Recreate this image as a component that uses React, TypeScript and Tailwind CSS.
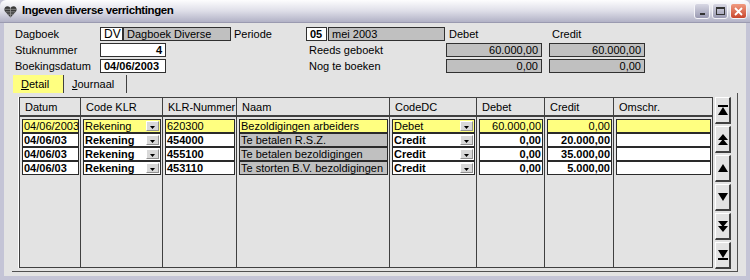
const rows = [
  { datum: '04/06/2003', code: 'Rekening', nr: '620300', naam: 'Bezoldigingen arbeiders', dc: 'Debet', debet: '60.000,00', credit: '0,00', active: true },
  { datum: '04/06/03', code: 'Rekening', nr: '454000', naam: 'Te betalen R.S.Z.', dc: 'Credit', debet: '0,00', credit: '20.000,00', active: false },
  { datum: '04/06/03', code: 'Rekening', nr: '455100', naam: 'Te betalen bezoldigingen', dc: 'Credit', debet: '0,00', credit: '35.000,00', active: false },
  { datum: '04/06/03', code: 'Rekening', nr: '453110', naam: 'Te storten B.V. bezoldigingen', dc: 'Credit', debet: '0,00', credit: '5.000,00', active: false },
]

type Row = (typeof rows)[number]

const columns: { title: string; width: string; kind: 'text' | 'combo' | 'num' | 'naam'; get: (r: Row) => string }[] = [
  { title: 'Datum', width: 'w-[61px]', kind: 'text', get: (r) => r.datum },
  { title: 'Code KLR', width: 'w-[82px]', kind: 'combo', get: (r) => r.code },
  { title: 'KLR-Nummer', width: 'w-[74px]', kind: 'text', get: (r) => r.nr },
  { title: 'Naam', width: 'w-[153px]', kind: 'naam', get: (r) => r.naam },
  { title: 'CodeDC', width: 'w-[87px]', kind: 'combo', get: (r) => r.dc },
  { title: 'Debet', width: 'w-[68px]', kind: 'num', get: (r) => r.debet },
  { title: 'Credit', width: 'w-[69px]', kind: 'num', get: (r) => r.credit },
  { title: 'Omschr.', width: 'w-[99px]', kind: 'text', get: () => '' },
]

const DropArrow = () => (
  <svg width="5" height="3" viewBox="0 0 5 3" className="mt-[2px]">
    <path d="M0 0h5L2.5 3z" fill="#000" />
  </svg>
)

const Cell = ({ row, kind, text }: { row: Row; kind: string; text: string }) => {
  let tone = row.active ? 'bg-[#ffff80]' : 'bg-white font-bold'
  if (kind === 'naam' && !row.active) tone = 'bg-[#c0c0c0]'
  return (
    <div className={`ml-[2px] mr-[1px] h-[14px] border border-[#2a2a2a] flex ${tone}`}>
      <div className={`flex-1 px-[1px] leading-[12px] whitespace-nowrap ${kind === 'num' ? 'text-right' : ''}`}>{text}</div>
      {kind === 'combo' && (
        <div className="w-[13px] my-[1px] mr-[1px] bg-[#d8d8d8] border-t border-l border-white border-r border-b border-r-[#909090] border-b-[#909090] flex items-center justify-center">
          <DropArrow />
        </div>
      )}
    </div>
  )
}

const Box = ({ w, children, grey, bold, right }: { w: string; children?: React.ReactNode; grey?: boolean; bold?: boolean; right?: boolean }) => (
  <div
    className={`${w} h-[14px] border border-[#303030] leading-[12px] px-[3px] whitespace-nowrap overflow-hidden ${grey ? 'bg-[#c0c0c0]' : 'bg-white'} ${bold ? 'font-bold' : ''} ${right ? 'text-right' : ''}`}
  >
    {children}
  </div>
)

const ScrollIcon = ({ type }: { type: number }) => {
  const paths: Record<number, string> = {
    0: 'M0 0h10v2H0z M5 2L10 10H0z',
    1: 'M5 0L10 6H0z M5 5L10 11H0z',
    2: 'M5 1L10 9H0z',
    3: 'M0 1h10L5 9z',
    4: 'M0 0h10L5 6z M0 5h10L5 11z',
    5: 'M0 0h10L5 8z M0 8h10v2H0z',
  }
  return (
    <svg width="10" height="11" viewBox="0 0 10 11">
      <path d={paths[type]} fill="#000" />
    </svg>
  )
}

export default function App() {
  return (
    <div className="w-[750px] h-[280px] bg-[#c4c4d6] flex flex-col overflow-hidden font-['Liberation_Sans',Arial,sans-serif] text-[11px] text-black">
      {/* title bar */}
      <div className="h-[23px] flex items-center bg-linear-to-b from-[#fdfdfe] via-[#dedee8] to-[#b2b2c6] border-b border-[#9a9ab0] rounded-t-[6px] shrink-0">
        <svg width="13" height="13" viewBox="0 0 12 12" className="ml-[4px] mr-[5px]">
          <path d="M6 11.5L0.8 5.8C-0.2 4.2 0.6 1.2 3.2 1.2C4.6 1.2 5.5 2.2 6 2.8C6.5 2.2 7.4 1.2 8.8 1.2C11.4 1.2 12.2 4.2 11.2 5.8Z" fill="#3a3a3a" />
          <path d="M1 4h10M1.5 6.3h9M3 8.5h6M6 2.8V11" stroke="#9a9a9a" strokeWidth="0.7" />
        </svg>
        <span className="font-bold text-[11.5px] tracking-[-0.4px]">Ingeven diverse verrichtingen</span>
        <div className="ml-auto mr-[3px] flex gap-[2px]">
          <div className="w-[16px] h-[16px] rounded-[3px] border border-[#f4f4f8] bg-linear-to-b from-[#d8d8e4] to-[#9a9ab2] flex items-end justify-center pb-[3px]">
            <div className="w-[5px] h-[2px] bg-[#333]" />
          </div>
          <div className="w-[16px] h-[16px] rounded-[3px] border border-[#f4f4f8] bg-linear-to-b from-[#d8d8e4] to-[#9a9ab2] flex items-center justify-center">
            <div className="w-[9px] h-[8px] border border-[#333] border-t-2" />
          </div>
          <div className="w-[17px] h-[16px] rounded-[3px] border border-[#f4f4f8] bg-linear-to-b from-[#f09a80] to-[#c8442c] flex items-center justify-center">
            <svg width="9" height="9" viewBox="0 0 9 9">
              <path d="M1 1L8 8M8 1L1 8" stroke="#fff" strokeWidth="1.8" />
            </svg>
          </div>
        </div>
      </div>

      {/* body */}
      <div className="flex-1 mx-[4px] mb-[4px] bg-[#e3e3e3] flex flex-col pt-[4px]">
        <div className="flex flex-col gap-[2px] pl-[11px] leading-[14px]">
          <div className="flex h-[14px]">
            <div className="w-[85px]">Dagboek</div>
            <Box w="w-[23px]">
              <span className="text-[12px]">DV</span>
            </Box>
            <Box w="w-[108px]" grey>
              Dagboek Diverse
            </Box>
            <div className="w-[75px] pl-[3px]">Periode</div>
            <Box w="w-[21px]" bold>
              05
            </Box>
            <div className="w-[1px]" />
            <Box w="w-[117px]" grey>
              mei 2003
            </Box>
            <div className="w-[107px] pl-[4px]">Debet</div>
            <div>Credit</div>
          </div>
          <div className="flex h-[14px]">
            <div className="w-[85px]">Stuknummer</div>
            <Box w="w-[66px]" bold right>
              4
            </Box>
            <div className="w-[143px]" />
            <div className="w-[137px]">Reeds geboekt</div>
            <Box w="w-[96px]" grey right>
              60.000,00
            </Box>
            <div className="w-[7px]" />
            <Box w="w-[96px]" grey right>
              60.000,00
            </Box>
          </div>
          <div className="flex h-[14px]">
            <div className="w-[85px]">Boekingsdatum</div>
            <Box w="w-[66px]" bold>
              04/06/2003
            </Box>
            <div className="w-[143px]" />
            <div className="w-[137px]">Nog te boeken</div>
            <Box w="w-[96px]" grey right>
              0,00
            </Box>
            <div className="w-[7px]" />
            <Box w="w-[96px]" grey right>
              0,00
            </Box>
          </div>
        </div>

        {/* tabs */}
        <div className="mt-[2px] h-[18px] flex ml-[9px] leading-[18px]">
          <div className="w-[51px] bg-[#ffff80] border-r border-[#404040] pl-[8px]">
            <span className="underline">D</span>etail
          </div>
          <div className="w-[63px] border-r border-[#404040] pl-[8px]">
            <span className="underline">J</span>ournaal
          </div>
        </div>

        {/* panel */}
        <div className="h-[179px] ml-[8px] mr-[8px] pt-[4px] pb-[3px] pl-[6px] border-b border-r border-[#505050] flex">
          <div className="border-l border-white flex">
            <div className="h-[171px] border-l border-t border-b border-[#404040] flex">
              {columns.map((c) => (
                <div key={c.title} className={`${c.width} border-r border-[#404040] flex flex-col`}>
                  <div className="h-[19px] pl-[5px] leading-[18px] border-b-2 border-[#404040] whitespace-nowrap">{c.title}</div>
                  <div className="pt-[2px] flex flex-col">
                    {rows.map((r, i) => (
                      <Cell key={i} row={r} kind={c.kind} text={c.get(r)} />
                    ))}
                  </div>
                </div>
              ))}
            </div>
          </div>
          <div className="ml-[2px] w-[16px] flex flex-col gap-[2px] h-[172px]">
            {[0, 1, 2, 3, 4, 5].map((t) => (
              <div
                key={t}
                className="h-[27px] bg-[#e3e3e3] border-t border-l border-white border-r-2 border-b-2 border-r-[#404040] border-b-[#404040] flex items-center justify-center"
              >
                <ScrollIcon type={t} />
              </div>
            ))}
          </div>
        </div>
      </div>
    </div>
  )
}
